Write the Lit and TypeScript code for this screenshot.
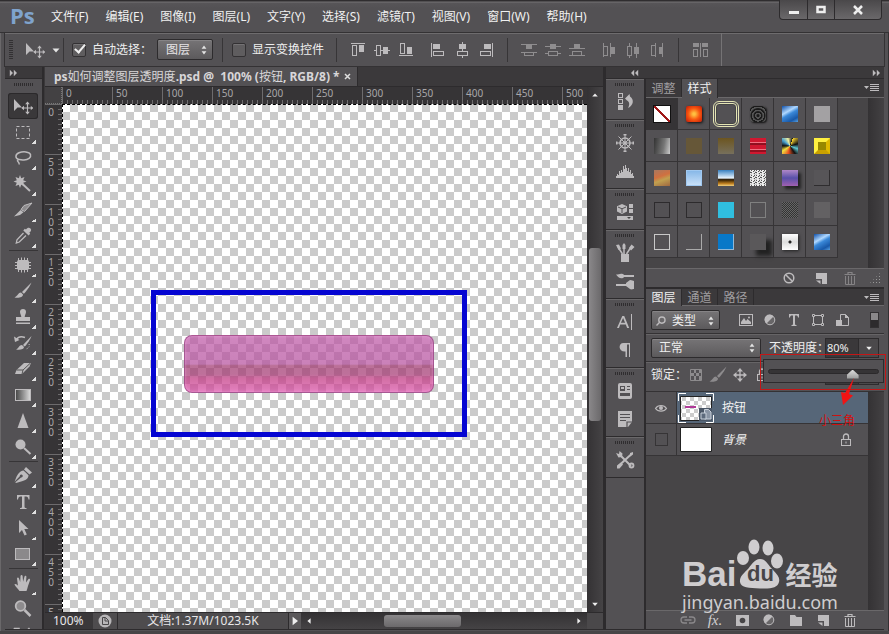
import { LitElement, html, svg, css, TemplateResult, SVGTemplateResult } from "lit";
import { customElement, state } from "lit/decorators.js";
import { classMap } from "lit/directives/class-map.js";

/* Icon glyphs, each drawn on a 20 x 20 grid. */
const ICONS: Record<string, SVGTemplateResult> = {
  move: svg`<path d="M1 3v12l3.500-3.600H9z"/><path d="M14.500 6.500v11M9.500 12h10.500" stroke="currentColor" stroke-width="1.200"/><path d="M14.500 5.500l2.300 2.700h-4.600zM14.500 18.500l2.300-2.700h-4.600zM8.300 12l2.700-2.300v4.600zM20 12l-2.200-2.300v4.600z"/>`,
  marquee: svg`<rect x="3.500" y="4.500" width="13" height="12" fill="none" stroke="currentColor" stroke-dasharray="3 2"/>`,
  lasso: svg`<path d="M5.500 11.500C2 10 2 6.500 6 4.800s10.500-1.300 11.500 1.700-2.500 5.500-6.500 5.500c-3 0-6-1.500-6.500.300s2.500 1.700 1.500 4.200" fill="none" stroke="currentColor" stroke-width="1.500"/>`,
  wand: svg`<path d="M7 1l1.200 3.300L11.500 3l-1.300 3.200L13.500 7.500l-3.300 1.300 1.300 3.200-3.300-1.200L7 14l-1.200-3.200L2.500 12l1.300-3.200L.500 7.500l3.300-1.300L2.500 3l3.300 1.300z"/><path d="M9.500 10l7.500 7" stroke="currentColor" stroke-width="2"/>`,
  slice: svg`<path d="M19 3l-8 2.500-3 4 3.500 2z" fill="#8d8b8d" stroke="currentColor"/><path d="M7.500 10l3 2.300L7 15l-6 1.500z"/>`,
  dropper: svg`<path d="M17.500 2.500c-1.500-1.400-3.300-.700-4.500 1l-1.200-.800-1.500 1.700 5.300 5.100 1.600-1.700-.900-1.200c1.700-1.200 2.500-2.700 1.200-4.100z"/><path d="M10.500 7L4 13.700 3.300 17l3-1L13 9.500" fill="none" stroke="currentColor" stroke-width="1.300"/>`,
  heal: svg`<rect x="4" y="5" width="12" height="10" rx="2"/><path d="M5.500 3v14M8.500 2.500v15M11.500 2.500v15M14.500 3v14M2 7.500h16M2 10.500h16M2 13.500h16" stroke="currentColor" stroke-width="1"/>`,
  brush: svg`<path d="M18.500 1.500L9 11l1.800 1.800C13 11 17 5 18.500 1.500z"/><path d="M8 11.500c-3 0-3 3.500-6.500 5 4 .800 8.500 0 8.500-3z"/>`,
  stamp: svg`<path d="M8.300 10C8.300 8 7 7 7 5a3 3 0 016 0c0 2-1.300 3-1.300 5H17v4H3v-4z"/><path d="M3 15.500h14v1.500H3z"/>`,
  history: svg`<path d="M18.500 3L10 12l1.600 1.600C14 11.500 17.500 6 18.500 3z"/><path d="M9 12c-3 0-3 3-6 4.500 4 .700 8 0 8-2.500z"/><path d="M12 4.500C8 3 5 4 3.500 6.500" fill="none" stroke="currentColor" stroke-width="1.500"/><path d="M1 3.500l1 5.500 4.500-2z"/><path d="M16 11c1 2 0 4-3 5" fill="none" stroke="currentColor" stroke-dasharray="1 1.500"/>`,
  eraser: svg`<path d="M11 4h7l-1.500 3.500L9 15H2l1.500-4z"/><path d="M3.500 11H10l7.500-7M10 11l-1 4" stroke="#555" fill="none"/>`,
  gradient: svg`<defs><linearGradient id="gr"><stop offset="0" stop-color="#444"/><stop offset="1" stop-color="#ddd"/></linearGradient></defs><rect x="2.500" y="4.500" width="15" height="11" fill="url(#gr)" stroke="currentColor"/>`,
  sharpen: svg`<path d="M10 2l5.500 15h-11z"/>`,
  dodge: svg`<circle cx="7.500" cy="7.500" r="5"/><path d="M11 11l6.500 6" stroke="currentColor" stroke-width="2"/>`,
  pen: svg`<path d="M13 1l6 5.500-2.500 2L11 3.500z"/><path d="M10.500 4.500l5 4.700c0 3-2.500 5-6.500 6L3 17l-.700-.700L8 11.500a1.500 1.500 0 10-1.200-1.200L1.500 15.800 3 12c1.500-4 4-7 7.500-7.500z"/>`,
  type: svg`<path d="M4 3h12.500v4.500h-1C15.300 5.500 14.500 4.500 13 4.500h-1.500v10c0 1 .500 1.500 2 1.500v1H7v-1c1.500 0 2-.500 2-1.500v-10H7.500C6 4.500 5.200 5.500 5 7.500H4z"/>`,
  typeSmall: svg`<path d="M5 4h10v3.500h-1C13.800 6 13.300 5.500 12 5.500h-1v8c0 1 .300 1.500 1.500 1.500v1h-5v-1C8.700 15 9 14.500 9 13.500v-8H8C6.700 5.500 6.200 6 6 7.500H5z"/>`,
  arrow: svg`<path d="M6 2v13l3-3 2.500 5.500 2.300-1.100L11.300 11H15.500z"/>`,
  shape: svg`<rect x="2.500" y="4.500" width="14" height="11" fill="#8b898b" stroke="currentColor"/>`,
  hand: svg`<path d="M6.500 18c-1-2-4.500-4.500-5-6.500.700-1.200 2.500 0 3.500 1.200L4 5.500c.200-1.300 1.600-1.300 2 0L7.200 9 7.500 3c.300-1.400 1.900-1.400 2.100 0l.500 5.800L11.500 3.500c.500-1.200 2-.800 1.900.500L13 9.500l2.300-3.300c.900-1 2.200-.200 1.700 1L15 13c-.500 2-1 3.500-1.500 5z"/>`,
  zoom: svg`<circle cx="7.500" cy="7" r="4.800" fill="#8d8b8d" stroke="currentColor" stroke-width="1.800"/><path d="M11.500 11l6 6" stroke="currentColor" stroke-width="2.500"/>`,
  swap: svg`<path d="M1 3.500h5v3h4v5M1 3.500v5h4M14 6.500h4v4M16.500 3L13 6.500l3.500 3" fill="none" stroke="currentColor" stroke-width="1.500"/>`,

  aTop: svg`<path d="M3 3.500h14" stroke="currentColor"/><rect x="4.500" y="5.500" width="4" height="10" fill="none" stroke="currentColor"/><rect x="11" y="5" width="5" height="7"/>`,
  aMid: svg`<path d="M2 10.500h16" stroke="currentColor"/><rect x="4.500" y="5.500" width="4" height="10" fill="#535154" stroke="currentColor"/><rect x="11" y="7" width="5" height="7"/>`,
  aBot: svg`<path d="M3 15.500h14" stroke="currentColor"/><rect x="4.500" y="3.500" width="4" height="10" fill="none" stroke="currentColor"/><rect x="11" y="7" width="5" height="7"/>`,
  aLeft: svg`<path d="M3.500 3v14" stroke="currentColor"/><rect x="5" y="4" width="7" height="5"/><rect x="5.500" y="11.500" width="10" height="4" fill="none" stroke="currentColor"/>`,
  aCen: svg`<path d="M10.500 2v16" stroke="currentColor"/><rect x="7" y="4" width="7" height="5"/><rect x="5.500" y="11.500" width="10" height="4" fill="#535154" stroke="currentColor"/>`,
  aRight: svg`<path d="M16.500 3v14" stroke="currentColor"/><rect x="8" y="4" width="7" height="5"/><rect x="4.500" y="11.500" width="10" height="4" fill="none" stroke="currentColor"/>`,
  dTop: svg`<path d="M2 4.500h16M2 12.500h16" stroke="currentColor"/><rect x="7" y="5" width="6" height="4"/><rect x="5.500" y="12.500" width="9" height="3" fill="none" stroke="currentColor"/>`,
  dMid: svg`<path d="M2 6.500h16M2 13.500h16" stroke="currentColor"/><rect x="7" y="4" width="6" height="5"/><rect x="5.500" y="11.500" width="9" height="4" fill="#535154" stroke="currentColor"/>`,
  dBot: svg`<path d="M2 8.500h16M2 15.500h16" stroke="currentColor"/><rect x="7" y="4" width="6" height="4"/><rect x="5.500" y="11.500" width="9" height="4" fill="none" stroke="currentColor"/>`,
  dLeft: svg`<path d="M4.500 3v14M11.500 3v14" stroke="currentColor"/><rect x="4.500" y="6.500" width="4" height="9" fill="none" stroke="currentColor"/><rect x="12" y="7" width="4" height="7"/>`,
  dCen: svg`<path d="M6.500 3v15M13.500 3v15" stroke="currentColor"/><rect x="4.500" y="6.500" width="4" height="9" fill="#535154" stroke="currentColor"/><rect x="11" y="7" width="5" height="7"/>`,
  dRight: svg`<path d="M8.500 3v14M15.500 3v14" stroke="currentColor"/><rect x="4.500" y="5.500" width="4" height="10" fill="none" stroke="currentColor"/><rect x="12" y="7" width="4" height="7"/>`,
  auto: svg`<path d="M10.500 3v14" stroke="currentColor"/><rect x="3" y="3" width="6" height="4"/><rect x="12" y="3" width="6" height="4"/><rect x="3.500" y="9.500" width="4" height="7" fill="none" stroke="currentColor"/><rect x="13.500" y="9.500" width="4" height="7" fill="none" stroke="currentColor"/>`,

  hist: svg`<rect x="3.500" y="1.500" width="4" height="4" fill="none" stroke="currentColor"/><rect x="3.500" y="7.500" width="4" height="4" fill="none" stroke="currentColor"/><rect x="3" y="13" width="5" height="5"/><path d="M10 6.500l4.500-4.500.500 2.500c4.500 3 3.500 9-2 11.500 2-3.500 1.500-6-1-7.500z"/>`,
  wheel: svg`<circle cx="10" cy="10" r="5" fill="none" stroke="currentColor" stroke-width="1.500"/><path d="M10 1v18M1 10h18M3.500 3.500l13 13M16.500 3.500l-13 13" stroke="currentColor"/><circle cx="10" cy="10" r="1.800"/><path d="M8.500 1h3v1.500h-3zM8.500 17.500h3V19h-3zM1 8.500h1.500v3H1zM17.500 8.500H19v3h-1.500z"/>`,
  histogram: svg`<path d="M1 17v-2h1v-2h1v1h1v-4h1v2h1V9h1v2h1V5h1v3h1V4h1v3h1v3h1V7h1v4h1V9h1v4h1v-1h1v3h1v2z"/>`,
  props: svg`<path d="M7 2l5 2.200v5.300L7 12 2 9.500V4.200z"/><path d="M3 5l4 1.800L11 5M7 7v4" stroke="#535154" fill="none"/><rect x="14" y="2" width="4" height="4"/><rect x="14" y="7" width="4" height="4"/><rect x="2" y="14" width="16" height="4"/><path d="M12 15h4l-2 2z" fill="#444"/>`,
  presets: svg`<path d="M6 11h8v8H6z"/><path d="M9 11V2M7.500 11L3 4M11.500 11L16 4" stroke="currentColor" stroke-width="1.500"/><path d="M7.500 6V2L9 0l1.500 2v4zM1 2l3-.500 2 4L3.500 7zM14 5l2.500-3.500L19.500 4 16 7.500z"/>`,
  brushes: svg`<path d="M9 4h10v2H9zM1 3.500C4 3.500 5 2 8 3c2 1 2 3 0 4C5 8 3 6 1 3.500zM1 13h10v2H1zM11 12l4-3c2 0 3 1 4 1v8c-1 0-3 1-4 0l-4-3z"/>`,
  char: svg`<path d="M2 16L7.300 4h1.900L14.200 16h-2.100l-1.300-3.500H5.200L4 16zm3.900-5.200h4.200L8.100 6z"/><path d="M16.500 2v16" stroke="currentColor"/>`,
  para: svg`<path d="M15 3v14h-1V4.500h-2V17h-1.500v-5.500C3 12 3 3 8.500 3z"/>`,
  notes: svg`<rect x="3" y="2" width="14" height="16" rx="2"/><path d="M5 5h5v5H5zM12 5h3v1h-3zM12 8h3v1h-3zM5 12h10v3H5z" fill="#535154"/><path d="M6 6h3v2H6z"/>`,
  note: svg`<path d="M3 2h14v11l-4 5H3z"/><path d="M5 5.500h10M5 8.500h10M5 11.500h6M12 18v-5h5" stroke="#535154" stroke-width="1.200" fill="none"/>`,
  tools: svg`<path d="M4 15.500L16 4.500M5 5l11 11" stroke="currentColor" stroke-width="2"/><path d="M1 3l3 1 .5-3 3 2.500L7 7 3.500 7.500zM15 3l3-1v2.500l-3 2zM2 15.500l4-3 2 2-3.500 4H2z"/><circle cx="16.500" cy="15.500" r="2" fill="none" stroke="currentColor" stroke-width="1.800"/>`,

  menu: svg`<path d="M2 7h5l-2.500 3z"/><path d="M8 5.500h9M8 7.500h9M8 9.500h9M8 11.500h9" stroke="currentColor" stroke-width="1"/>`,
  image: svg`<rect x="3.500" y="4.500" width="13" height="11" fill="none" stroke="currentColor"/><path d="M5 14v-2l3-4 2 3 1.500-2 3.500 3v2z"/><circle cx="13" cy="7.500" r="1"/>`,
  adjust: svg`<circle cx="10" cy="10" r="4.800" fill="#686668" stroke="currentColor"/><path d="M13.500 6.500l-7 7A5 5 0 1113.500 6.500z"/>`,
  path: svg`<path d="M5.500 5.500h9v9h-9z" fill="none" stroke="currentColor"/><path d="M4.500 4.500h2v2h-2zM13.500 4.500h2v2h-2zM4.500 13.500h2v2h-2zM13.500 13.500h2v2h-2z" fill="#474547" stroke="currentColor"/>`,
  smart: svg`<path d="M8.500 4.500h5l3 3v8h-8z" fill="none" stroke="currentColor"/><path d="M13 4v4h4z"/><path d="M4 10h6v6H4z"/>`,
  checker: svg`<path d="M4.500 4.500h11v11h-11z" fill="none" stroke="currentColor"/><path d="M8 5h2v3H8zM13 5h2v3h-2zM5 8h3v3H5zM10 8h3v3h-3zM8 11h2v4H8zM13 11h2v4h-2z"/>`,
  cross: svg`<path d="M10 5v10M5 10h10" stroke="currentColor" stroke-width="1.300"/><path d="M10 3l3 3.500H7zM10 17l3-3.500H7zM3 10l3.500-3v6zM17 10l-3.500-3v6z"/>`,
  lock: svg`<path d="M7.500 9V6.500a2.500 2.500 0 015 0V9" fill="none" stroke="currentColor" stroke-width="1.300"/><rect x="5.500" y="9.500" width="9" height="6" fill="none" stroke="currentColor"/><path d="M9.500 11.500h1v2h-1z"/>`,
  eye: svg`<path d="M4.500 10.500c2.500-4 8.500-4 11 0-2.500 3.500-8.500 3.500-11 0z" fill="none" stroke="currentColor" stroke-width="1.200"/><circle cx="10" cy="10" r="2"/>`,
  link: svg`<path d="M9 7H6a3 3 0 000 6h3M11 7h3a3 3 0 010 6h-3M6.500 10h7" fill="none" stroke="currentColor" stroke-width="1.300"/>`,
  mask: svg`<path d="M4 5h13v11H4z"/><circle cx="10.500" cy="10.500" r="2.800" fill="#474547"/>`,
  folder: svg`<path d="M4 5h5l1.500 2H16v9H4z"/>`,
  fresh: svg`<path d="M5 5h11v11h-5v-5H5z"/><path d="M5 12.500h4.500V16z"/>`,
  trash: svg`<path d="M4.500 6.500h11M8 6V4.500h4V6" fill="none" stroke="currentColor" stroke-width="1.200"/><path d="M5.500 8v8.500h9V8M8.500 8v8M11.500 8v8" fill="none" stroke="currentColor"/>`,
  none: svg`<circle cx="10" cy="10" r="4.800" fill="none" stroke="currentColor" stroke-width="1.500"/><path d="M6.700 6.700l6.600 6.600" stroke="currentColor" stroke-width="1.500"/>`,
  search: svg`<circle cx="11" cy="9" r="3.500" fill="none" stroke="currentColor" stroke-width="1.500"/><path d="M8.500 11.500L5 15" stroke="currentColor" stroke-width="1.500"/>`,
  bridge: svg`<circle cx="10" cy="10" r="6.500" fill="#b8b6b8"/><path d="M7.500 6.500h3l3 3v4h-6zM10 6.500V10h3" fill="none" stroke="#4a484a"/>`,
  back: svg`<path d="M9 6v8l-4-4zM14 6v8l-4-4z"/>`,
  forward: svg`<path d="M6 6v8l4-4zM11 6v8l4-4z"/>`,
  down: svg`<path d="M6.500 8.500h7L10 12.500z"/>`,
  updown: svg`<path d="M7 8.500h6l-3-4zM7 11.500h6l-3 4z"/>`,
  up: svg`<path d="M6.500 12h7L10 8z"/>`,
  left: svg`<path d="M12 6.500v7L8 10z"/>`,
  right: svg`<path d="M8 6.500v7l4-3.500z"/>`,
  play: svg`<path d="M6 3v14l9-7z"/>`,
};

const icon = (name: string) =>
  html`<svg class="icon" viewBox="0 0 20 20" fill="currentColor" aria-hidden="true">${ICONS[name]}</svg>`;

const shared = css`
  :host { box-sizing: border-box; }
  *, *::before, *::after { box-sizing: border-box; }
  button, select, input {
    font: inherit; color: inherit; margin: 0; padding: 0; border: 0;
    background: none; border-radius: 0; outline: 0;
  }
  .icon { width: 20px; height: 20px; flex: none; display: block; color: #bdbbbd; }
  .combo { display: grid; align-items: center; border: 1px solid #2d2b2d; border-radius: 2px;
    background: linear-gradient(#767476, #5c5a5c); box-shadow: inset 0 1px #868486; }
  .combo > * { grid-area: 1 / 1; }
  .combo select { appearance: none; height: 18px; width: 100%; line-height: 18px; }
  .combo .icon:last-child { justify-self: end; pointer-events: none; color: #e4e4e4; width: 16px; height: 16px; }
`;

@customElement("ps-menu-bar")
class MenuBar extends LitElement {
  static styles = [shared, css`
    :host { display: flex; height: 33px; padding-left: 10px; align-items: flex-start;
      background: linear-gradient(#2f2d2f 1px, #757375 2px, #575558 3px, #535154 8px);
      border-bottom: 1px solid #343234; }
    .logo { width: 33px; font: bold 22px/30px "Open Sans", sans-serif; color: #7fa3cd; }
    nav { display: flex; gap: 17px; padding-left: 8px; flex: 1; }
    nav button { line-height: 33px; color: #f0f0f0; white-space: nowrap; }
    .win { display: flex; margin-right: 7px; border: 1px solid #2d2b2d; border-top: 0; border-radius: 0 0 4px 4px;
      height: 20px; background: linear-gradient(#4a484a, #6a686a); }
    .win button { width: 27px; display: grid; place-items: center; }
    .win button + button { border-left: 1px solid #2d2b2d; }
    .win button:last-child { width: 47px; }
    .win svg { width: 12px; height: 12px; display: block; }
  `];
  render() {
    const items = ["文件(F)", "编辑(E)", "图像(I)", "图层(L)", "文字(Y)", "选择(S)", "滤镜(T)", "视图(V)", "窗口(W)", "帮助(H)"];
    return html`
      <span class="logo">Ps</span>
      <nav>${items.map((t) => html`<button>${t}</button>`)}</nav>
      <div class="win">
        <button aria-label="最小化"><svg viewBox="0 0 12 12"><path d="M1 7h10v3H1z" fill="#eee"/></svg></button>
        <button aria-label="最大化"><svg viewBox="0 0 12 12"><path d="M2.500 3h7v5h-7z" fill="none" stroke="#eee" stroke-width="2.500"/></svg></button>
        <button aria-label="关闭"><svg viewBox="0 0 12 12"><path d="M2 2l8 8M10 2l-8 8" stroke="#eee" stroke-width="2.500"/></svg></button>
      </div>`;
  }
}

@customElement("ps-options-bar")
class OptionsBar extends LitElement {
  static styles = [shared, css`
    :host { display: flex; align-items: center; height: 34px; margin: 0 4px; padding-left: 4px;
      border: 1px solid #343234; border-width: 0 1px 1px; box-shadow: inset 0 1px #6e6c6e; white-space: nowrap; overflow: hidden; }
    .grip { width: 4px; height: 20px; background: repeating-linear-gradient(#333133 0 1px, #535154 1px 2px); }
    .tool { display: flex; align-items: center; padding: 0 0 0 12px; width: 50px; height: 20px; }
    .tool .icon + .icon { margin-left: 1px; color: #e4e4e4; }
    .sep { width: 1px; height: 24px; background: #373537; flex: none; }
    label { display: flex; align-items: center; gap: 6px; color: #eee; }
    label.auto { padding: 0 5px 0 8px; }
    label.show { padding: 0 12px 0 9px; }
    input { appearance: none; width: 14px; height: 14px; border: 1px solid #333133; border-radius: 2px; background: #5f5d5f;
      display: grid; place-items: center; box-shadow: inset 0 1px #747274; }
    input:checked::after { content: ""; width: 6px; height: 11px; border: solid #f0f0f0; border-width: 0 2px 2px 0; transform: translate(1px, -2px) rotate(40deg); }
    .combo { width: 56px; height: 21px; margin-right: 9px; }
    .combo select { padding-left: 8px; }
    .set { display: flex; gap: 4px; padding: 0 11px; }
    .set.off .icon { color: #8f8d8f; }
    .set + .set { padding-left: 1px; }
    .end { width: 1px; height: 33px; background: #757375; }
  `];
  private set(names: string[], off = false) {
    return html`<div class=${classMap({ set: true, off })}>${names.map(icon)}</div>`;
  }
  render() {
    return html`
      <span class="grip"></span>
      <span class="tool">${icon("move")}${icon("down")}</span>
      <span class="sep"></span>
      <label class="auto"><input type="checkbox" checked />自动选择：</label>
      <span class="combo"><select aria-label="选择对象"><option>图层</option></select>${icon("updown")}</span>
      <span class="sep"></span>
      <label class="show"><input type="checkbox" />显示变换控件</label>
      <span class="sep"></span>
      ${this.set(["aTop", "aMid", "aBot"])}${this.set(["aLeft", "aCen", "aRight"])}
      <span class="sep"></span>
      ${this.set(["dTop", "dMid", "dBot"], true)}${this.set(["dLeft", "dCen", "dRight"], true)}
      <span class="sep"></span>
      ${this.set(["auto"], true)}
      <span class="end"></span>`;
  }
}

@customElement("ps-toolbox")
class Toolbox extends LitElement {
  static styles = [shared, css`
    :host { display: flex; flex-direction: column; width: 39px; flex: none; border-right: 2px solid #2d2b2d; background: #535154; overflow: hidden; }
    .head { height: 12px; background: #3b393b; border-bottom: 1px solid #2d2b2d; flex: none; display: flex; align-items: center; }
    .head .icon { width: 16px; height: 16px; }
    .grip { width: 20px; height: 3px; margin: 4px auto 7px; flex: none; background: repeating-linear-gradient(90deg, #2f2d2f 0 1px, #535154 1px 2px); }
    button { position: relative; display: grid; place-items: center; height: 26px; flex: none; width: 30px; margin: 0 auto 0 3px; border-radius: 3px; }
    button.on { background: #3a383a; box-shadow: inset 0 0 0 1px #2b292b; }
    button.more::after { content: ""; position: absolute; right: 2px; bottom: 1px; width: 4px; height: 4px;
      background: linear-gradient(135deg, transparent 50%, #e0e0e0 50%); }
    .sep { height: 1px; margin: 1px 4px; background: #373537; flex: none; }
  `];
  @state() private active = "move";
  render() {
    const groups = [
      ["move", "marquee", "lasso", "wand", "slice", "dropper"],
      ["heal", "brush", "stamp", "history", "eraser", "gradient", "sharpen", "dodge"],
      ["pen", "type", "arrow", "shape"],
      ["hand", "zoom", "swap"],
    ];
    const plain = ["move", "zoom", "swap"];
    return html`
      <div class="head">${icon("forward")}</div><div class="grip"></div>
      ${groups.map((g, i) => html`${i ? html`<div class="sep"></div>` : null}
        ${g.map((n) => html`<button aria-label=${n} class=${classMap({ on: n === this.active, more: !plain.includes(n) })}
          @click=${() => (this.active = n)}>${icon(n)}</button>`)}`)}`;
  }
}

@customElement("ps-document")
class DocumentView extends LitElement {
  static styles = [shared, css`
    :host { display: flex; flex-direction: column; background: #3b393b; min-width: 0; padding-left: 1px; }
    .tabs { height: 20px; display: flex; border-bottom: 1px solid #2d2b2d; flex: none; }
    .tab { display: flex; align-items: center; gap: 4px; background: #535154; padding: 0 6px 0 9px; color: #d8d6d8; white-space: nowrap; border-right: 1px solid #2d2b2d; }
    .tab svg { width: 7px; height: 7px; display: block; }
    .body { flex: 1; min-height: 0; display: grid; grid-template: 17px minmax(0, 1fr) 17px / 17px minmax(0, 1fr) 16px; }
    .corner { background: #434143; border-right: 1px dotted #777; border-bottom: 1px dotted #777; }
    .ruler { background: #363436; overflow: hidden; display: flex; color: #a8a6a8; font-size: 10px; }
    .ruler span { flex: none; }
    .h span { width: 50px; border-left: 1px solid #6d6b6d; padding-left: 3px; line-height: 13px;
      background: repeating-linear-gradient(90deg, #6d6b6d 0 1px, transparent 1px 5px) left 4px bottom 0 / 100% 4px no-repeat; }
    .v { flex-direction: column; }
    .v span { height: 50px; border-top: 1px solid #6d6b6d; padding: 2px 8px 0 3px; line-height: 10px; word-break: break-all; text-align: center;
      background: repeating-linear-gradient(#6d6b6d 0 1px, transparent 1px 5px) right 0 top 4px / 4px 100% no-repeat; }
    .canvas { position: relative; overflow: hidden;
      background: repeating-conic-gradient(#fff 0 25%, #cbcbcb 0 50%) 8px 0 / 16px 16px; }
    .ants { position: absolute; inset: 0; border: 1px dashed #000; border-width: 1px 0 0 1px; }
    .frame { position: absolute; left: 89px; top: 186px; width: 316px; height: 147px; border: 5px solid #0505d2; }
    .pill { position: absolute; left: 122px; top: 231px; width: 250px; height: 58px; border-radius: 8px; border: 1px solid rgba(150, 70, 130, .7);
      box-shadow: inset 0 0 3px rgba(255, 170, 235, .6);
      background: linear-gradient(rgba(188, 84, 164, .7), rgba(180, 76, 156, .7) 50%, rgba(158, 52, 108, .7) 53%, rgba(162, 52, 112, .7) 68%, rgba(192, 50, 126, .7) 76%, rgba(216, 74, 164, .7)); }
    .vbar { grid-row: 1 / span 2; grid-column: 3; display: flex; flex-direction: column; align-items: center; justify-content: space-between;
      background: linear-gradient(90deg, #343234, #454345); }
    .vbar .icon { width: 16px; height: 16px; color: #eee; }
    .thumb { background: linear-gradient(90deg, #8a888a, #6b696b); border-radius: 3px; }
    .vbar .thumb { width: 12px; height: 173px; margin-bottom: 31px; }
    .status { grid-column: 1 / span 3; display: flex; align-items: stretch; border-top: 1px solid #2d2b2d; color: #e8e6e8; line-height: 16px; min-width: 0; }
    .zoom { width: 48px; padding-left: 8px; background: #3a383a; }
    .zoom input { width: 38px; font-size: 12px; height: 16px; display: block; }
    .bridge { width: 24px; background: #4e4c4e; display: grid; place-items: center; align-content: center; height: 16px; }
    .info { width: 171px; text-align: center; background: #4e4c4e; border-left: 1px solid #2d2b2d; }
    .play { width: 13px; background: #5a585a; border-left: 1px solid #2d2b2d; display: grid; place-items: center; }
    .play .icon { width: 12px; height: 12px; color: #eee; }
    .hbar { flex: 1; display: flex; align-items: center; justify-content: space-between; background: linear-gradient(#343234, #454345); }
    .hbar .icon { width: 16px; height: 16px; color: #eee; }
    .hbar .thumb { width: 77px; height: 12px; margin-right: 44px; background: linear-gradient(#8a888a, #6b696b); }
    .fill { width: 16px; background: #4a484a; }
  `];
  @state() private across = 11;
  @state() private down = 11;
  private watcher = new ResizeObserver(([entry]) => {
    this.across = Math.ceil((entry.contentRect.width - 33) / 50);
    this.down = Math.ceil((entry.contentRect.height - 54) / 50);
  });
  connectedCallback() {
    super.connectedCallback();
    this.watcher.observe(this);
  }
  disconnectedCallback() {
    super.disconnectedCallback();
    this.watcher.disconnect();
  }
  private marks(count: number) {
    return Array.from({ length: Math.max(count, 0) }, (_, i) => html`<span>${i * 50}</span>`);
  }
  render() {
    return html`
      <div class="tabs"><div class="tab">
        <span><b>ps</b>如何调整图层透明度<b>.psd @ &nbsp;100% (</b>按钮<b>, RGB/8) *</b></span>
        <button aria-label="关闭文档"><svg viewBox="0 0 7 7"><path d="M1 1l5 5M6 1L1 6" stroke="#ddd" stroke-width="1.500"/></svg></button>
      </div></div>
      <div class="body">
        <div class="corner"></div>
        <div class="ruler h">${this.marks(this.across)}</div>
        <div class="vbar">${icon("up")}<div class="thumb"></div>${icon("down")}</div>
        <div class="ruler v">${this.marks(this.down)}</div>
        <div class="canvas"><div class="frame"></div><div class="pill"></div><div class="ants"></div></div>
        <div class="status">
          <div class="zoom"><input aria-label="缩放" value="100%" /></div>
          <div class="bridge">${icon("bridge")}</div>
          <div class="info">文档:1.37M/1023.5K</div>
          <button class="play" aria-label="状态选项">${icon("play")}</button>
          <div class="hbar">${icon("left")}<div class="thumb"></div>${icon("right")}</div>
          <div class="fill"></div>
        </div>
      </div>`;
  }
}

@customElement("ps-dock")
class Dock extends LitElement {
  static styles = [shared, css`
    :host { display: flex; flex-direction: column; width: 38px; flex: none; background: #535154; }
    .group { border-bottom: 1px solid #2d2b2d; box-shadow: inset 0 1px #6a686a; }
    .group::before { content: ""; display: block; width: 20px; height: 3px; margin: 4px auto 6px;
      background: repeating-linear-gradient(90deg, #2f2d2f 0 1px, #535154 1px 2px); }
    button { display: grid; place-items: start center; width: 100%; height: 28px; }
    button:last-child { height: 27px; }
  `];
  render() {
    const groups = [["hist"], ["wheel", "histogram"], ["props"], ["presets", "brushes"], ["char", "para"], ["notes", "note"], ["tools"]];
    return groups.map((g) => html`<div class="group">${g.map((n) => html`<button aria-label=${n}>${icon(n)}</button>`)}</div>`);
  }
}

const panel = css`
  .tabs { display: flex; height: 19px; background: #3b393b; border-bottom: 1px solid #6a686a; flex: none; }
  .tabs button { width: 36px; color: #a09ea0; border-right: 1px solid #2d2b2d; line-height: 17px; white-space: nowrap; }
  .tabs button.on { background: #535154; color: #f0f0f0; margin-bottom: -1px; }
  .tabs .icon { margin-left: auto; margin-right: 2px; }
  .foot { display: flex; align-items: center; height: 19px; background: #535154; border-top: 1px solid #6a686a; flex: none; }
  .track { width: 16px; flex: none; background: linear-gradient(90deg, #343234, #434143); }
`;

@customElement("ps-styles-panel")
class StylesPanel extends LitElement {
  static styles = [shared, panel, css`
    :host { display: flex; flex-direction: column; }
    .area { display: flex; height: 170px; background: #474547; }
    .grid { display: grid; grid-template-columns: repeat(6, 32px); grid-auto-rows: 32px; align-content: start; flex: 1; }
    .grid button { border: solid #363436; border-width: 0 1px 1px 0; background: #535154; display: grid; place-items: center; }
    .grid button:first-child { background: #363436; }
    i { display: block; width: 16px; height: 16px; }
    .s0 { background: linear-gradient(45deg, transparent 45%, #a01818 45% 55%, transparent 55%), #fff; outline: 1px solid #111; }
    .s1 { background: radial-gradient(#ffc040 10%, #f85810 50%, #c01808); box-shadow: 1px 1px 3px #111; border-radius: 2px; }
    .s2 { width: 20px; height: 20px; border: 1px solid #444; border-radius: 3px; outline: 3px double #e4e4b4; }
    .s3 { background: repeating-radial-gradient(circle at 50% 60%, #1a1a1a 0 1px, #555 2px 3px), #333; border-radius: 4px; box-shadow: 1px 1px 2px #111; }
    .s4, .s29 { background: linear-gradient(150deg, #1050a8, #b0d8ff 35%, #3a88d8 50%, #1858a8 80%, #58a0e0); }
    .s5 { background: #a3a1a3; }
    .s6 { background: linear-gradient(100deg, #333, #777 60%, #ccc); }
    .s7 { background: #665738; }
    .s8 { background: linear-gradient(#6c5520, #77705c); }
    .s9 { background: repeating-linear-gradient(#d01830 0 4px, #f07080 4px 5px, #901020 5px 7px); }
    .s10 { background: conic-gradient(from 20deg, #ffd830, #111 15%, #60c8d0 25%, #111 35%, #e85020 48%, #f0e040 60%, #111 70%, #48a0d0 80%, #f0f0a0 90%, #111); }
    .s11 { background: #988800; border: 4px solid; border-color: #fff040 #e0b800 #c8a000 #fff040; }
    .s12 { background: linear-gradient(160deg, #a87860, #d07040 40%, #c0a050 60%, #a06840); }
    .s13 { background: linear-gradient(#88b8e8, #c8e0f8); border: 1px solid #a0c8f0; }
    .s14 { background: linear-gradient(#3880c0, #e8f4ff 50%, #2a1800 60%, #c08020 85%, #f0d080); }
    .s15 { background: repeating-conic-gradient(#eee 0 8%, #555 0 14%, #ccc 0 21%) 0 0 / 5px 5px; }
    .s16 { background: linear-gradient(#b088c8, #5850a8 50%, #a060b0); box-shadow: 3px 3px 3px #222; }
    .s17 { border: solid #2f2d2f; border-width: 0 1px 1px 0; background: #575558; }
    .s18, .s19 { border: 1px solid #2d2b2d; }
    .s20 { background: #30bfe0; }
    .s21 { border: 1px solid #808080; }
    .s22 { background: repeating-conic-gradient(#333 0 25%, #666 0 50%) 0 0 / 2px 2px; }
    .s23 { background: #636163; }
    .s24 { border: 1px solid #c8c8c8; }
    .s25 { border: solid #aaa; border-width: 0 1px 1px 0; }
    .s26 { background: #0878c8; border: solid #90b8d8; border-width: 0 1px 1px 0; }
    .s27 { background: #5a585a; box-shadow: 6px 6px 4px #222; }
    .s28 { background: radial-gradient(circle, #222 0 1px, transparent 2px), linear-gradient(#fff, #ddd 50%, #fff); box-shadow: 1px 1px 3px #222; }
    .foot { justify-content: flex-end; gap: 9px; padding-right: 3px; }
    .foot .icon:nth-child(1) { margin-right: 3px; }
    .foot .icon:nth-child(3) { color: #858385; }
    .corner { width: 12px; height: 12px; background: radial-gradient(circle, #999 0 1px, transparent 1px) 0 0 / 3px 3px; clip-path: polygon(100% 0, 100% 100%, 0 100%); }
  `];
  render() {
    return html`
      <div class="tabs"><button>调整</button><button class="on">样式</button>${icon("menu")}</div>
      <div class="area">
        <div class="grid">${Array.from({ length: 30 }, (_, i) => html`<button aria-label="样式 ${i + 1}"><i class="s${i}"></i></button>`)}</div>
        <div class="track"></div>
      </div>
      <div class="foot">${icon("none")}${icon("fresh")}${icon("trash")}<span class="corner"></span></div>`;
  }
}

@customElement("ps-layers-panel")
class LayersPanel extends LitElement {
  static styles = [shared, panel, css`
    :host { display: flex; flex-direction: column; position: relative; z-index: 1; min-height: 0; }
    .tabs { height: 17px; }
    .row { display: flex; align-items: center; background: #535154; border-bottom: 1px solid #343234; height: 28px; padding-left: 5px; flex: none; color: #eee; }
    .row + .row { box-shadow: inset 0 1px #666466; }
    .combo { height: 20px; }
    .kind { width: 69px; margin-right: 16px; }
    .kind select { padding-left: 20px; }
    .kind .icon:first-child { width: 18px; }
    .filters { display: flex; gap: 4px; flex: 1; }
    .switch { width: 9px; height: 16px; margin-right: 5px; background: linear-gradient(#8a888a 50%, #2d2b2d 50%); border: 1px solid #333133; }
    .mode { width: 110px; margin-right: 8px; }
    .mode select { padding-left: 7px; }
    .field { display: flex; align-items: center; flex: 1; justify-content: space-between; white-space: nowrap; padding-right: 5px; min-width: 0; }
    .field label { margin-right: -4px; }
    .value { display: flex; width: 54px; height: 20px; flex: none; background: #3a383a; border: 1px solid #2d2b2d; }
    .value input { width: 32px; padding-left: 1px; font-size: 11px; }
    .value button { flex: 1; display: grid; place-items: center; background: #4b494b; border-left: 1px solid #2d2b2d; }
    .value .icon { width: 16px; height: 16px; color: #eee; }
    .locks { display: flex; gap: 2px; flex: 1; }
    .lockrow { height: 30px; align-items: flex-start; padding: 3px 5px 0; }
    .locks .icon:nth-child(-n + 2) { color: #8d8b8d; }
    .lockrow > .label { line-height: 20px; width: 35px; white-space: nowrap; }
    .area { display: flex; flex: 1; min-height: 0; background: #474547; }
    .list { flex: 1; }
    .layer { display: flex; align-items: center; height: 32px; background: #535154; border-bottom: 1px solid #363436; color: #f2f2f2; }
    .layer.on { background: linear-gradient(90deg, #535154 31px, #566678 31px); }
    .vis { width: 31px; height: 31px; display: grid; place-items: center; border-right: 1px solid #363436; }
    .vis i { width: 13px; height: 13px; border: 1px solid #363436; }
    .thumb { width: 36px; height: 30px; margin: 0 8px 0 1px; display: grid; place-items: center; }
    .thumb svg { width: 36px; height: 30px; display: block; }
    .bg { font-style: italic; }
    .layer > .icon { margin: 0 12px 0 auto; }
    .foot { gap: 7px; padding-left: 32px; }
    .foot .icon:first-child { color: #8a888a; }
    .fx { width: 20px; text-align: center; font: italic 15px/17px "Liberation Serif", serif; color: #d0ced0; }
    .pop { position: absolute; left: 117px; top: 70px; right: 0; height: 24px; background: #535154; border: 1px solid #2d2b2d; display: grid; place-items: center; }
    .pop input { appearance: none; width: 111px; height: 16px; }
    .pop input::-webkit-slider-runnable-track { height: 5px; background: #363436; border: 1px solid #2b292b; border-radius: 3px; }
    .pop input::-webkit-slider-thumb { appearance: none; width: 12px; height: 9px; background: linear-gradient(#ddd, #999); clip-path: polygon(50% 0, 100% 60%, 100% 100%, 0 100%, 0 60%); }
    .marker { position: absolute; z-index: 2; left: 114px; top: 65px; right: -2px; height: 36px; border: 1px solid #c41616; pointer-events: none; }
    .arrow { position: absolute; left: 190px; top: 88px; width: 24px; height: 30px; }
    .tip { position: absolute; left: 173px; top: 123px; color: #d01010; line-height: 18px; white-space: nowrap; }
    .brand { position: absolute; left: 36px; top: 250px; width: 160px; color: #cfcdcf; }
    .words { display: flex; height: 50px; align-items: flex-end; }
    .bai { font: bold 35px/30px "Liberation Sans", sans-serif; }
    .paw { position: relative; width: 48px; height: 50px; flex: none; }
    .paw svg { display: block; width: 48px; height: 50px; }
    .paw span { position: absolute; inset: 23px 0 0; text-align: center; font: bold 22px/24px "Liberation Sans", sans-serif; color: #474547; }
    .jy { font: bold 26px/30px "Noto Sans CJK SC", sans-serif; margin-left: 1px; white-space: nowrap; }
    .url { font: 18px/26px "Noto Sans", sans-serif; display: block; }
  `];
  @state() private opacity = 80;
  render() {
    return html`
      <div class="tabs"><button class="on">图层</button><button>通道</button><button>路径</button>${icon("menu")}</div>
      <div class="row">
        <span class="combo kind">${icon("search")}<select aria-label="过滤"><option>类型</option></select>${icon("updown")}</span>
        <span class="filters">${["image", "adjust", "typeSmall", "path", "smart"].map(icon)}</span>
        <button class="switch" aria-label="打开过滤"></button>
      </div>
      <div class="row">
        <span class="combo mode"><select aria-label="混合模式"><option>正常</option></select>${icon("updown")}</span>
        <span class="field"><label for="op">不透明度：</label>
          <span class="value"><input id="op" .value=${this.opacity + "%"} /><button aria-label="展开">${icon("down")}</button></span></span>
      </div>
      <div class="row lockrow"><span class="label">锁定：</span><div class="locks">${["checker", "brush", "cross", "lock"].map(icon)}</div>
        <span class="value"><input aria-label="填充" /><button aria-label="展开填充"></button></span></div>
      <div class="area">
        <div class="list">
          <div class="layer on">
            <span class="vis">${icon("eye")}</span>
            <span class="thumb"><svg viewBox="0 0 36 30">
              <defs><pattern id="ck" width="8" height="8" patternUnits="userSpaceOnUse"><path fill="#fff" d="M0 0h8v8H0z"/><path fill="#ccc" d="M0 0h4v4H0zM4 4h4v4H4z"/></pattern></defs>
              <path d="M2.500 3.500h31v24h-31z" fill="url(#ck)" stroke="#222"/><path d="M7 14h11" stroke="#b03a98" stroke-width="2"/>
              <path d="M21 15h13v13H21z" fill="#4a5666"/><path d="M26.500 16.500h4l2.500 2.500v7h-6.500z" fill="#8a95a5" stroke="#c8d0da"/><path d="M23 20h5v6h-5z" fill="#5d6a7c" stroke="#c8d0da"/>
              <path d="M.500 8V.500H8M28 .500h7.500V8M.500 22v7.500H8M35.500 22v7.500H28" fill="none" stroke="#fff"/></svg></span>
            <span>按钮</span>
          </div>
          <div class="layer">
            <span class="vis"><i></i></span>
            <span class="thumb"><svg viewBox="0 0 36 30"><path d="M2.500 2.500h31v24h-31z" fill="#fff" stroke="#222"/></svg></span>
            <span class="bg">背景</span>${icon("lock")}
          </div>
        </div>
        <div class="track"></div>
      </div>
      <div class="foot">${icon("link")}<span class="fx">fx.</span>${["mask", "adjust", "folder", "fresh", "trash"].map(icon)}</div>

      <div class="brand">
        <div class="words"><span class="bai">Bai</span>
          <span class="paw"><svg viewBox="0 0 48 50" fill="currentColor">
            <ellipse cx="7" cy="19" rx="6" ry="7"/><ellipse cx="18" cy="8" rx="5.500" ry="7.500"/><ellipse cx="32" cy="9" rx="5.500" ry="7.500"/><ellipse cx="41" cy="22" rx="6" ry="7.500"/>
            <path d="M24 20c6 0 8 6 13 11s7 8 6 12c-1.500 6-8 7-19 6.500S5 49 4 43c-.500-5 3-8 7-12s7-11 13-11z"/></svg><span>du</span></span>
          <span class="jy">经验</span></div>
        <span class="url">jingyan.baidu.com</span>
      </div>
      <div class="pop"><input type="range" min="0" max="100" aria-label="不透明度" .value=${String(this.opacity)}
        @input=${(e: Event) => (this.opacity = Number((e.target as HTMLInputElement).value))} /></div>
      <div class="marker"></div>
      <svg class="arrow" viewBox="0 0 24 30"><path d="M18 1l-5 16 4 1.500L7 28 5 15l4 1z" fill="#f01414"/></svg>
      <span class="tip">小三角</span>`;
  }
}

@customElement("app-root")
class AppRoot extends LitElement {
  static styles = [shared, css`
    :host { display: flex; flex-direction: column; height: 100vh; overflow: hidden; background: #535154; padding-bottom: 4px;
      box-shadow: inset 0 -3px #474547, inset 1px 0 #6a686a, inset -1px 0 #333133;
      font: 12px/16px "Noto Sans", "Noto Sans CJK SC", sans-serif; color: #e6e4e6; }
    main { flex: 1; min-height: 0; display: flex; margin: 0 5px; border-bottom: 1px solid #2d2b2d; background: #2d2b2d; }
    ps-document { flex: 1; }
    .side { width: 278px; margin-left: 3px; flex: none; display: flex; flex-direction: column; min-height: 0; }
    .head { display: flex; justify-content: space-between; height: 12px; align-items: center; background: #3b393b; border-bottom: 1px solid #2d2b2d; padding: 0 0 0 21px; }
    .head .icon { width: 16px; height: 16px; }
    .cols { flex: 1; display: flex; min-height: 0; gap: 2px; }
    .panels { flex: 1; display: flex; flex-direction: column; gap: 2px; min-height: 0; min-width: 0; }
    ps-layers-panel { flex: 1; }
  `];
  render(): TemplateResult {
    return html`
      <ps-menu-bar></ps-menu-bar>
      <ps-options-bar></ps-options-bar>
      <main>
        <ps-toolbox></ps-toolbox>
        <ps-document></ps-document>
        <div class="side">
          <div class="head">${icon("back")}${icon("forward")}</div>
          <div class="cols">
            <ps-dock></ps-dock>
            <div class="panels"><ps-styles-panel></ps-styles-panel><ps-layers-panel></ps-layers-panel></div>
          </div>
        </div>
      </main>`;
  }
}
